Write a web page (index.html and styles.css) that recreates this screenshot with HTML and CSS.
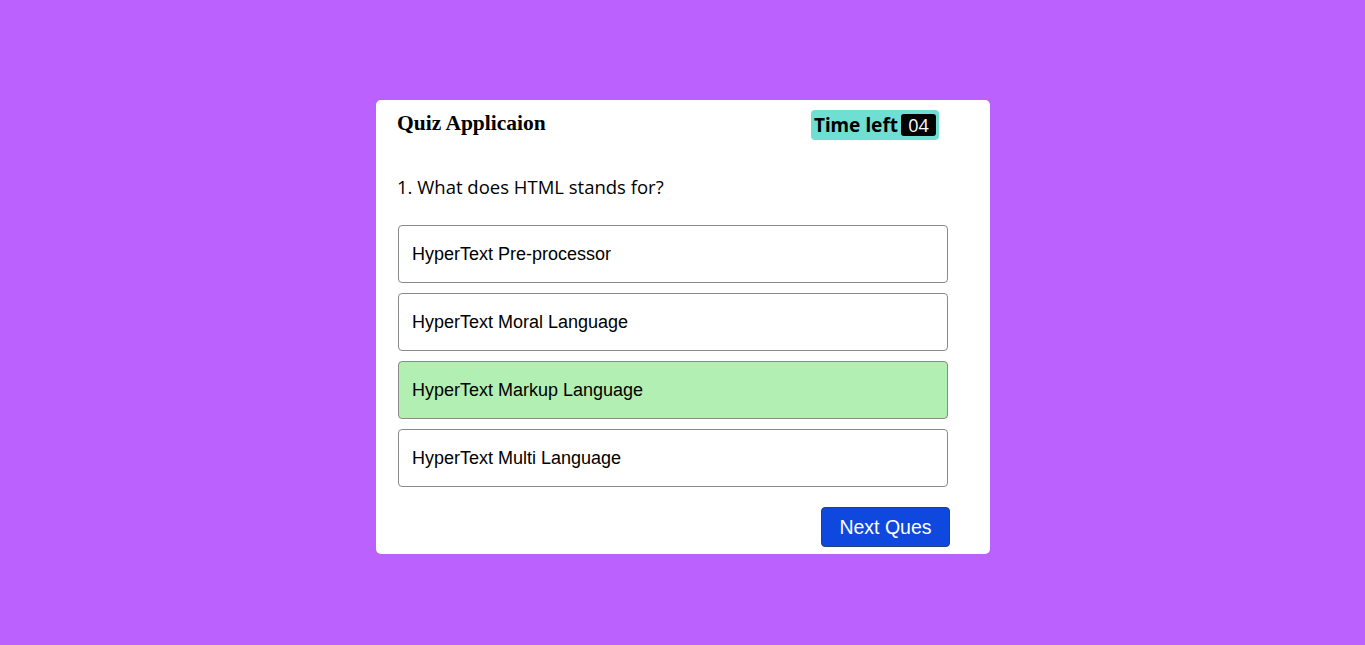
FILE: index.html
```html
<!DOCTYPE html>
<html>
<head>
<meta charset="utf-8">
<link rel="stylesheet" href="styles.css">
</head>
<body>
<div class="card">
  <div class="header">
    <h1 class="title">Quiz Applicaion</h1>
    <div class="timer">Time left <span class="count">04</span></div>
  </div>
  <div class="question">1. What does HTML stands for?</div>
  <ul class="options">
    <li class="option">HyperText Pre-processor</li>
    <li class="option">HyperText Moral Language</li>
    <li class="option correct">HyperText Markup Language</li>
    <li class="option">HyperText Multi Language</li>
  </ul>
  <div class="footer">
    <button class="next">Next Ques</button>
  </div>
</div>
</body>
</html>
```
FILE: styles.css
```css
html, body {
  margin: 0;
  padding: 0;
}
body {
  background: #bb62fe;
  height: 645px;
  padding-top: 100px;
  box-sizing: border-box;
}
.card {
  width: 614px;
  height: 454px;
  margin-left: 376px;
  background: #fff;
  border-radius: 5px;
  box-sizing: border-box;
  padding: 10px 40px 0 21px;
}
.header {
  display: flex;
  justify-content: space-between;
  align-items: flex-start;
  padding-right: 11px;
}
.title {
  margin: 0;
  font-family: "Liberation Serif", serif;
  font-size: 21.5px;
  font-weight: bold;
  line-height: 26px;
  color: #000;
}
.timer {
  display: flex;
  align-items: center;
  height: 30px;
  box-sizing: border-box;
  padding: 0 3px;
  background: #6fdfd3;
  border-radius: 4px;
  font-family: "Noto Sans", sans-serif;
  font-weight: bold;
  font-size: 19px;
  color: #000;
  gap: 3px;
}
.count {
  display: inline-block;
  background: #000;
  color: #fff;
  font-family: "Open Sans", sans-serif;
  font-weight: normal;
  font-size: 18px;
  line-height: 22px;
  width: 35px;
  text-align: center;
  border-radius: 3px;
}
.question {
  margin-top: 34px;
  font-family: "Open Sans", sans-serif;
  font-size: 18.5px;
  line-height: 26px;
  color: #000;
}
.options {
  list-style: none;
  margin: 25px 0 0 1px;
  padding: 0;
  display: flex;
  flex-direction: column;
  gap: 10px;
  width: 550px;
}
.option {
  height: 58px;
  box-sizing: border-box;
  border: 1px solid #8a8a8a;
  border-radius: 4px;
  padding: 0 13px;
  display: flex;
  align-items: center;
  font-family: "Liberation Sans", Arial, sans-serif;
  font-size: 18px;
  color: #000;
}
.option.correct {
  background: #b1efb3;
}
.footer {
  display: flex;
  justify-content: flex-end;
  margin-top: 20px;
}
.next {
  width: 129px;
  height: 40px;
  background: #0e48de;
  color: #fff;
  border: 1px solid #24427a;
  border-radius: 4px;
  font-family: "Liberation Sans", Arial, sans-serif;
  font-size: 19.5px;
  padding: 0;
}
```
